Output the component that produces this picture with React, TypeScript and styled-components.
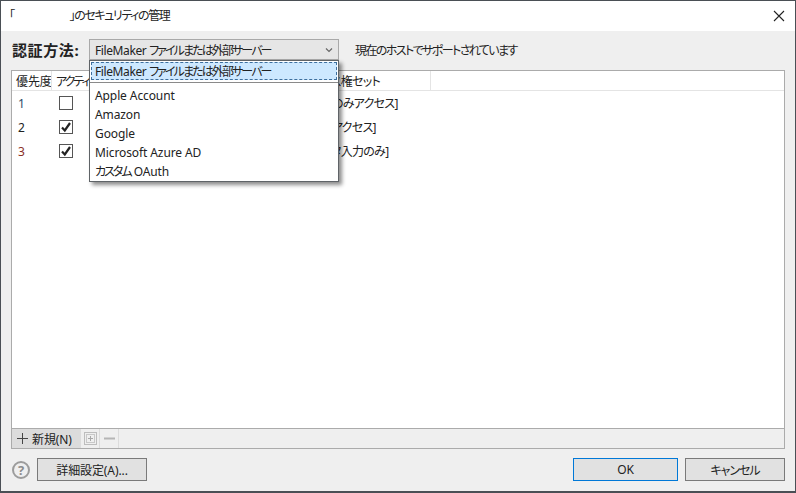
import React from "react";
import styled, { createGlobalStyle } from "styled-components";

const GlobalStyle = createGlobalStyle`
  html, body {
    margin: 0;
    padding: 0;
    background: #efefef;
  }
  * {
    box-sizing: border-box;
  }
`;

const Dialog = styled.div`
  position: relative;
  width: 796px;
  height: 493px;
  display: flex;
  flex-direction: column;
  background: #efefef;
  border: 1px solid #4a4f55;
  border-bottom-width: 2px;
  font-family: "Noto Sans", "Noto Sans CJK JP", sans-serif;
  font-size: 12px;
  font-feature-settings: "palt";
  letter-spacing: -0.1px;
  color: #222;
  overflow: hidden;
`;

// narrower kana, the reference font sets them much tighter than Noto
const Tight = styled.span<{ $ls: number }>`
  letter-spacing: ${(p) => p.$ls}px;
`;

const TitleBar = styled.div`
  height: 30px;
  flex: none;
  background: #fff;
  display: flex;
  align-items: center;
  justify-content: space-between;
  padding: 0 10px 0 8px;
`;

const Title = styled.div`
  margin-bottom: 2px;
  font-size: 12px;
  white-space: pre;
  letter-spacing: -1.4px;
`;

const Redacted = styled.span`
  display: inline-block;
  width: 56px;
`;

const CloseButton = styled.div`
  width: 12px;
  height: 12px;
  display: flex;
`;

const MethodRow = styled.div`
  height: 39px;
  flex: none;
  display: flex;
  align-items: center;
  padding: 0 0 2px 11px;
`;

const MethodLabel = styled.div`
  width: 77px;
  font-size: 15px;
  font-weight: 700;
  letter-spacing: 0.6px;
`;

const Select = styled.div`
  width: 250px;
  height: 21px;
  display: flex;
  align-items: center;
  justify-content: space-between;
  padding: 0 5px;
  background: #e6e6e6;
  border: 1px solid #a9a9a9;
`;

const Hint = styled.div`
  margin-left: 16px;
  letter-spacing: -1.6px;
`;

const Panel = styled.div`
  flex: 1;
  margin: 0 10px 0 10px;
  display: flex;
  flex-direction: column;
  background: #fff;
  border: 1px solid #ababab;
`;

const TableHead = styled.div`
  height: 20px;
  flex: none;
  display: flex;
  align-items: center;
  border-bottom: 1px solid #e4e4e4;
`;

const HeadCell = styled.div<{ $width: number; $indent?: number }>`
  width: ${(p) => p.$width}px;
  height: 100%;
  flex: none;
  display: flex;
  align-items: center;
  padding-left: ${(p) => p.$indent ?? 4}px;
  border-right: 1px solid #e4e4e4;
  white-space: nowrap;
  overflow: hidden;
`;

const TableBody = styled.div`
  flex: 1;
`;

const Row = styled.div`
  height: 24px;
  display: flex;
  align-items: center;
`;

const Num = styled.div<{ $color: string }>`
  width: 44px;
  padding-left: 6px;
  color: ${(p) => p.$color};
`;

const CheckCell = styled.div`
  width: 250px;
  padding-left: 3px;
  flex: none;
`;

const Check = styled.div`
  width: 14px;
  height: 14px;
  border: 1px solid #555;
  background: #fff;
  display: flex;
  align-items: center;
  justify-content: center;
`;

const Privilege = styled.div`
  white-space: nowrap;
  letter-spacing: -0.7px;
`;

const Footer = styled.div`
  height: 20px;
  flex: none;
  display: flex;
  align-items: stretch;
  background: #efefef;
  border-top: 1px solid #ababab;
`;

const NewButton = styled.div`
  width: 69px;
  display: flex;
  align-items: center;
  gap: 4px;
  padding-left: 5px;
  background: #dcdcdc;
`;

const ToolButton = styled.div`
  width: 19px;
  display: flex;
  align-items: center;
  justify-content: center;
  border-right: 1px solid #dcdcdc;
`;

const BottomBar = styled.div`
  height: 42px;
  flex: none;
  display: flex;
  align-items: center;
  padding: 0 10px 1px 11px;
`;

const Help = styled.div`
  width: 18px;
  height: 18px;
  margin-right: 7px;
  border-radius: 50%;
  border: 2px solid #9c9c9c;
  color: #8c8c8c;
  font-size: 13px;
  font-weight: 700;
  display: flex;
  align-items: center;
  justify-content: center;
`;

const Button = styled.div<{ $width: number; $primary?: boolean }>`
  width: ${(p) => p.$width}px;
  height: 23px;
  display: flex;
  align-items: center;
  justify-content: center;
  background: #e1e1e1;
  border: 1px solid ${(p) => (p.$primary ? "#0078d7" : "#7a7a7a")};
`;

const Spacer = styled.div`
  flex: 1;
`;

const ButtonGap = styled.div`
  width: 7px;
`;

const Dropdown = styled.div`
  position: absolute;
  left: 88px;
  top: 59px;
  width: 250px;
  height: 122px;
  background: #fff;
  border: 1px solid #5f6367;
  box-shadow: 3px 3px 4px rgba(0, 0, 0, 0.45);
  padding-top: 1px;
`;

const SelectedOption = styled.div`
  height: 18px;
  margin: 0 1px;
  padding-left: 3px;
  display: flex;
  align-items: center;
  background: #cde8ff;
  border: 1px dashed #3d6f9e;
`;

const Separator = styled.div`
  height: 1px;
  margin: 2px 0 3px;
  background: #8a8a8a;
`;

const Option = styled.div`
  height: 18.9px;
  padding-left: 5px;
  display: flex;
  align-items: center;
  white-space: pre;
`;

const rows = [
  { n: 1, checked: false, text: "[閲覧のみアクセス]", color: "#2a4a68" },
  { n: 2, checked: true, text: "[完全アクセス]", color: "#222" },
  { n: 3, checked: true, text: "[データ入力のみ]", color: "#8a3028" },
];

const options = ["Apple Account", "Amazon", "Google", "Microsoft Azure AD"];

const FileMakerLabel = () => (
  <span>
    <Tight $ls={-0.4}>FileMaker </Tight>
    <Tight $ls={-1.9}>ファイルまたは外部サーバー</Tight>
  </span>
);

export default function App() {
  return (
    <>
      <GlobalStyle />
      <Dialog>
        <TitleBar>
          <Title>
            「<Redacted />」のセキュリティの管理
          </Title>
          <CloseButton>
            <svg width="12" height="12" viewBox="0 0 12 12">
              <path d="M1 1L11 11M11 1L1 11" stroke="#222" strokeWidth="1.1" fill="none" />
            </svg>
          </CloseButton>
        </TitleBar>
        <MethodRow>
          <MethodLabel>認証方法:</MethodLabel>
          <Select>
            <FileMakerLabel />
            <svg width="8" height="6" viewBox="0 0 8 6">
              <path d="M1 1.5L4 4.5L7 1.5" stroke="#666" strokeWidth="1.2" fill="none" />
            </svg>
          </Select>
          <Hint>現在のホストでサポートされています</Hint>
        </MethodRow>
        <Panel>
          <TableHead>
            <HeadCell $width={40}>優先度</HeadCell>
            <HeadCell $width={100}>
              <Tight $ls={-2}>アクティブ</Tight>
            </HeadCell>
            <HeadCell $width={279} $indent={148}>
              <Tight $ls={-0.7}>アクセス権セット</Tight>
            </HeadCell>
          </TableHead>
          <TableBody>
            {rows.map((r) => (
              <Row key={r.n}>
                <Num $color={r.color}>{r.n}</Num>
                <CheckCell>
                  <Check>
                    {r.checked && (
                      <svg width="12" height="12" viewBox="0 0 12 12">
                        <path d="M2 6.5L4.8 9.5L10 2" stroke="#222" strokeWidth="2.2" fill="none" />
                      </svg>
                    )}
                  </Check>
                </CheckCell>
                <Privilege>{r.text}</Privilege>
              </Row>
            ))}
          </TableBody>
          <Footer>
            <NewButton>
              <svg width="11" height="11" viewBox="0 0 11 11">
                <path d="M5.5 0V11M0 5.5H11" stroke="#444" strokeWidth="1" fill="none" />
              </svg>
              新規(N)
            </NewButton>
            <ToolButton>
              <svg width="13" height="13" viewBox="0 0 13 13">
                <rect x="0.5" y="0.5" width="12" height="12" fill="none" stroke="#bdbdbd" />
                <rect x="2.5" y="2.5" width="8" height="8" fill="none" stroke="#c8c8c8" />
                <path d="M6.5 4V9M4 6.5H9" stroke="#a8a8a8" fill="none" />
              </svg>
            </ToolButton>
            <ToolButton>
              <svg width="11" height="3" viewBox="0 0 11 3">
                <path d="M0 1.5H11" stroke="#b5b5b5" strokeWidth="2" fill="none" />
              </svg>
            </ToolButton>
          </Footer>
        </Panel>
        <BottomBar>
          <Help>?</Help>
          <Button $width={110}>詳細設定(A)...</Button>
          <Spacer />
          <Button $width={105} $primary>OK</Button>
          <ButtonGap />
          <Button $width={100}>
            <Tight $ls={-1}>キャンセル</Tight>
          </Button>
        </BottomBar>
        <Dropdown>
          <SelectedOption>
            <FileMakerLabel />
          </SelectedOption>
          <Separator />
          {options.map((o) => (
            <Option key={o}>{o}</Option>
          ))}
          <Option>
            <Tight $ls={-2}>カスタム</Tight> OAuth
          </Option>
        </Dropdown>
      </Dialog>
    </>
  );
}
